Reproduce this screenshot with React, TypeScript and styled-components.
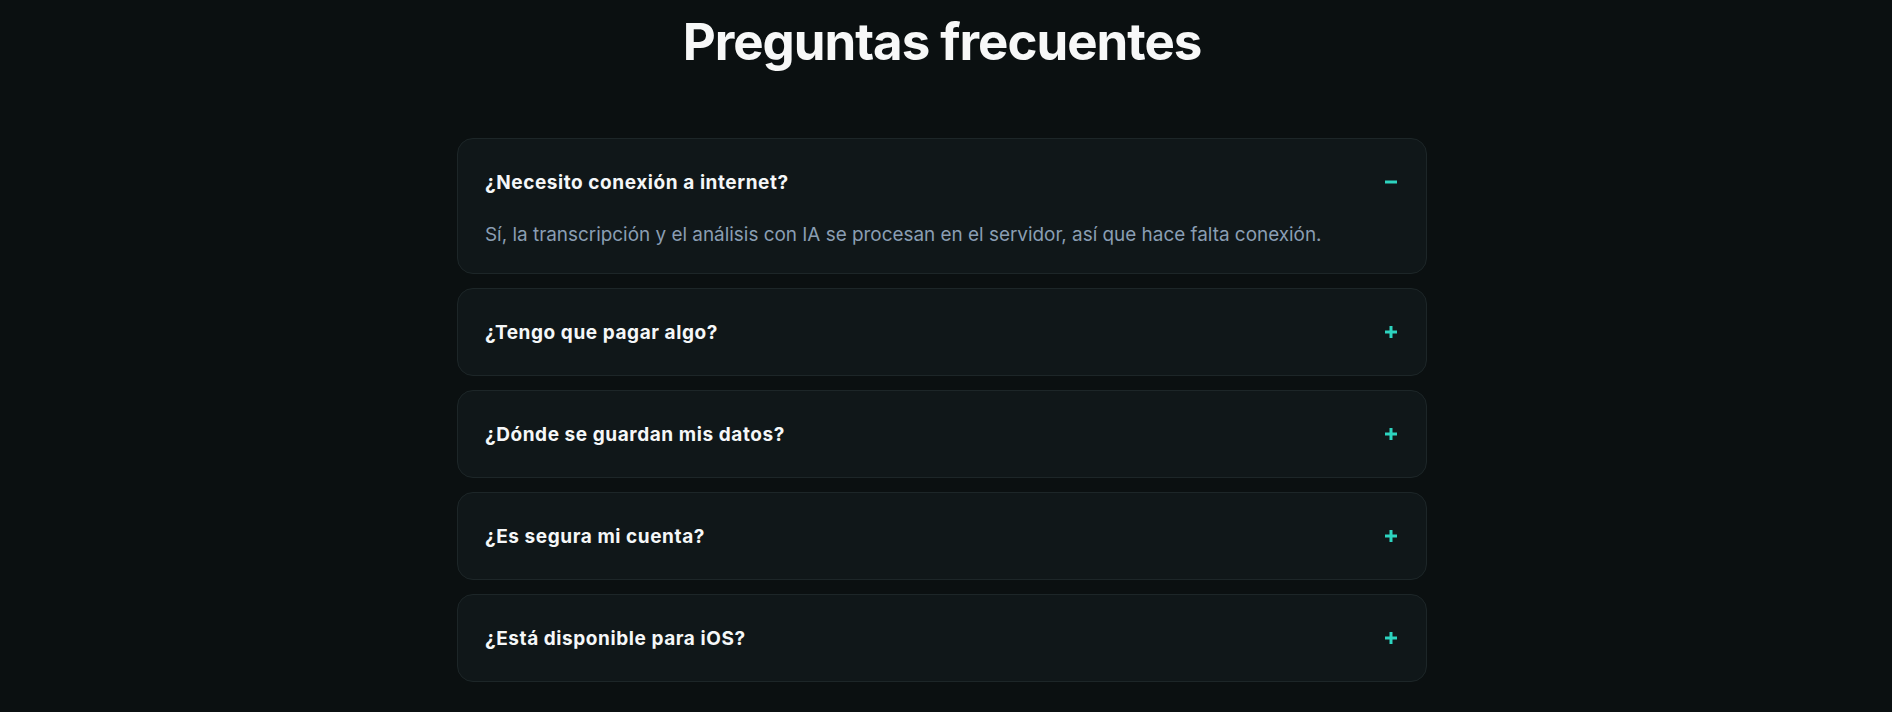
import React, { useState } from 'react';
import styled, { createGlobalStyle } from 'styled-components';

interface FaqItem {
  question: string;
  answer: string;
}

const FAQS: FaqItem[] = [
  {
    question: '¿Necesito conexión a internet?',
    answer:
      'Sí, la transcripción y el análisis con IA se procesan en el servidor, así que hace falta conexión.',
  },
  {
    question: '¿Tengo que pagar algo?',
    answer: 'No, la aplicación es gratuita.',
  },
  {
    question: '¿Dónde se guardan mis datos?',
    answer: 'Tus notas se guardan cifradas en tu cuenta.',
  },
  {
    question: '¿Es segura mi cuenta?',
    answer: 'Sí, usamos autenticación segura y conexiones cifradas.',
  },
  {
    question: '¿Está disponible para iOS?',
    answer: 'Por ahora solo en Android, pero iOS está en camino.',
  },
];

const ToggleIcon: React.FC<{ open: boolean }> = ({ open }) => (
  <svg width="16" height="16" viewBox="0 0 16 16" aria-hidden>
    <rect x="2" y="6.5" width="12" height="3" fill="currentColor" />
    {!open && <rect x="6.5" y="2" width="3" height="12" fill="currentColor" />}
  </svg>
);

const App: React.FC = () => {
  const [openIndex, setOpenIndex] = useState<number | null>(0);

  return (
    <>
      <GlobalStyle />
      <Page>
        <Title>Preguntas frecuentes</Title>
        <List>
          {FAQS.map((faq, i) => {
            const open = openIndex === i;
            return (
              <Card key={faq.question}>
                <Header onClick={() => setOpenIndex(open ? null : i)}>
                  <Question>{faq.question}</Question>
                  <IconWrap>
                    <ToggleIcon open={open} />
                  </IconWrap>
                </Header>
                {open && <Answer>{faq.answer}</Answer>}
              </Card>
            );
          })}
        </List>
      </Page>
    </>
  );
};

export default App;

const GlobalStyle = createGlobalStyle`
  html, body {
    margin: 0;
    background: #0b1011;
  }
  * {
    box-sizing: border-box;
  }
`;

const Page = styled.main`
  min-height: 712px;
  padding: 11px 8px 40px 0;
  display: flex;
  flex-direction: column;
  align-items: center;
  font-family: Inter, 'Liberation Sans', sans-serif;
`;

const Title = styled.h2`
  margin: 0;
  font-size: 51px;
  line-height: 1.2;
  font-weight: 700;
  letter-spacing: -0.02em;
  color: #f7f8f8;
`;

const List = styled.div`
  width: 970px;
  margin-top: 66px;
  display: flex;
  flex-direction: column;
  gap: 14px;
`;

const Card = styled.div`
  background: #101719;
  border: 1px solid #1d2628;
  border-radius: 16px;
`;

const Header = styled.button`
  width: 100%;
  height: 86px;
  padding: 0 27px;
  display: flex;
  align-items: center;
  justify-content: space-between;
  background: none;
  border: none;
  cursor: pointer;
  font: inherit;
  text-align: left;
`;

const Question = styled.span`
  font-size: 19px;
  font-weight: 700;
  letter-spacing: 0.03em;
  color: #f5f7f8;
`;

const IconWrap = styled.span`
  display: flex;
  color: #2dd4bf;
`;

const Answer = styled.p`
  margin: -2px 0 0;
  padding: 0 27px 26px;
  font-size: 18.9px;
  line-height: 24px;
  color: #8a9eb3;
`;
